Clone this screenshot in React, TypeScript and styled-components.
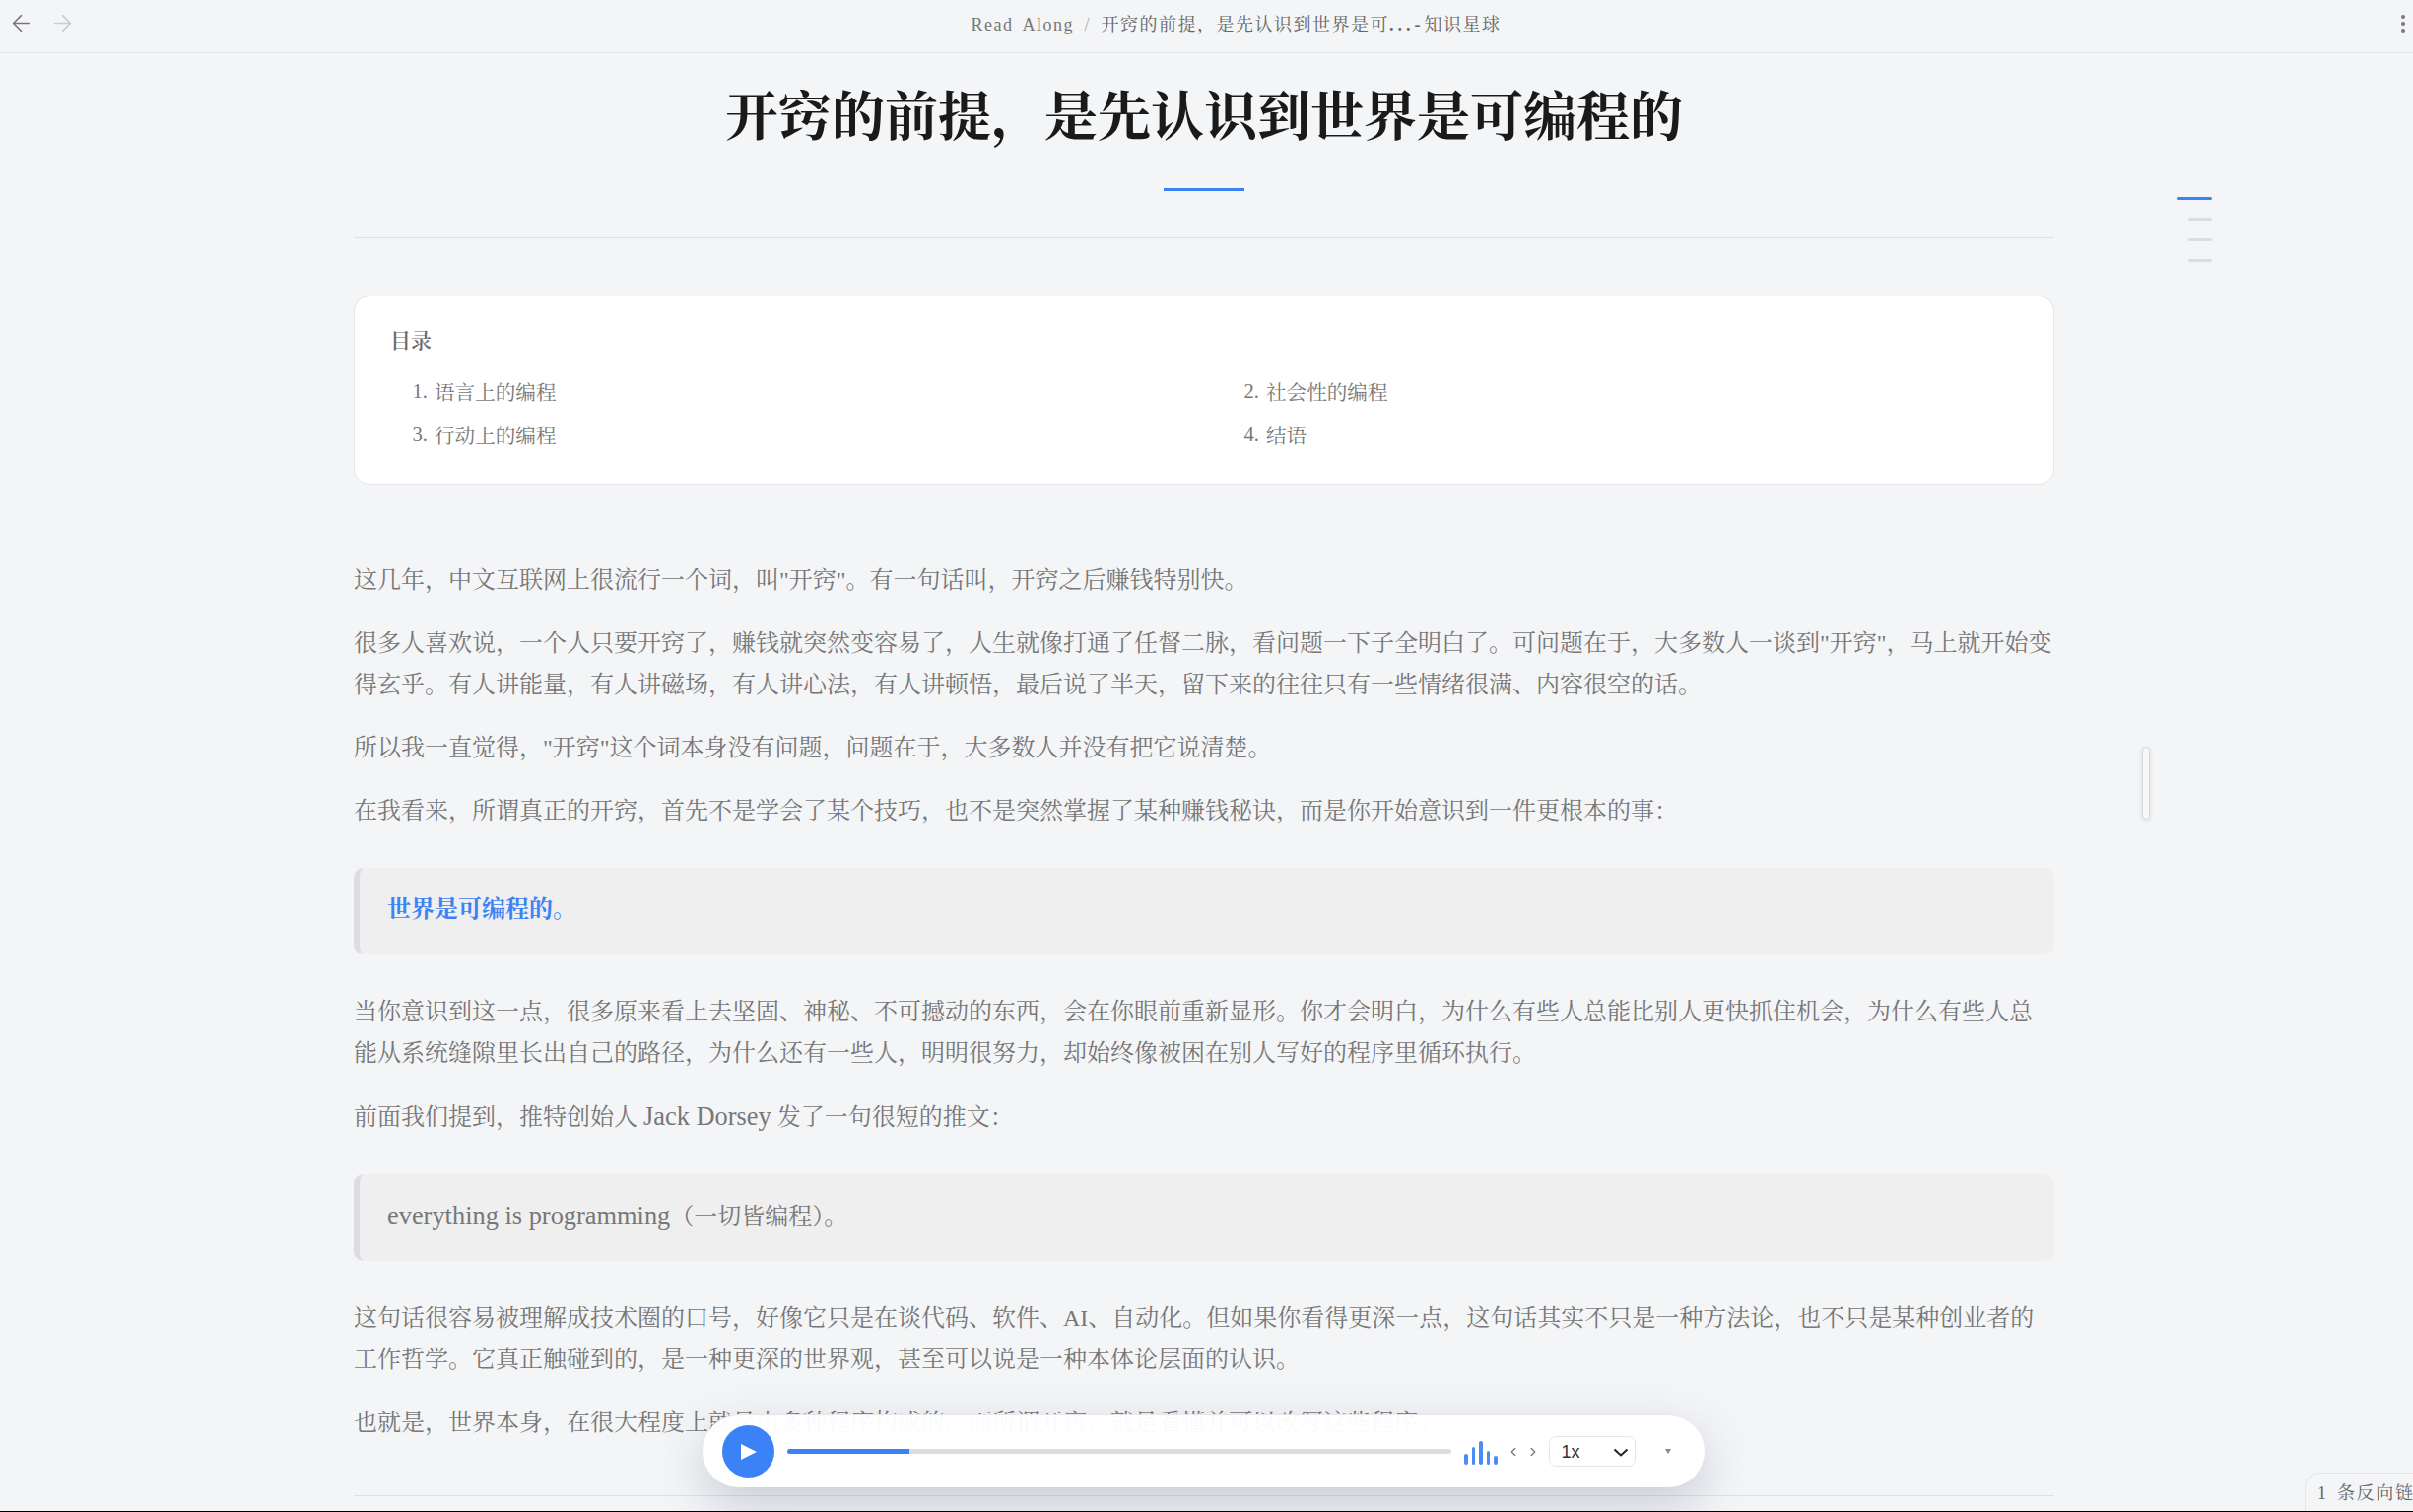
import React from "react";
import styled, { createGlobalStyle } from "styled-components";
import { ArrowLeft, ArrowRight, ChevronLeft, ChevronRight } from "lucide-react";

const serif = `"Liberation Serif", "Noto Serif CJK SC", "Noto Sans CJK SC", serif`;

const GlobalStyle = createGlobalStyle`
  html, body {
    margin: 0;
    background: #000;
  }
  * {
    box-sizing: border-box;
  }
`;

const Page = styled.div`
  position: relative;
  height: calc(100vh - 1px);
  overflow: hidden;
  background: #f4f5f7;
  font-family: ${serif};
  color: #777;
`;

const Header = styled.header`
  display: grid;
  grid-template-columns: 100px 1fr 100px;
  align-items: center;
  height: 54px;
  padding: 0 4px 6px 8px;
  border-bottom: 1.5px solid #e5e7eb;
`;

const NavButtons = styled.div`
  display: flex;
  gap: 15px;
`;

const NavIcon = styled.span<{ $dim?: boolean }>`
  display: flex;
  color: ${(p) => (p.$dim ? "#c8cacd" : "#777")};
`;

const Crumbs = styled.div`
  margin-bottom: 2px;
  padding-left: 56px;
  text-align: center;
  font-size: 18px;
  letter-spacing: 1.5px;
  color: #666;
`;

const CrumbRoot = styled.span`
  color: #777;
  word-spacing: 4px;
`;

const Slash = styled.span`
  margin: 0 10.5px;
  color: #aaa;
`;

const Ellipsis = styled.span`
  letter-spacing: 4px;
  font-weight: 700;
`;

const Kebab = styled.div`
  justify-self: end;
  display: flex;
  flex-direction: column;
  gap: 3px;
  margin-right: 4px;
`;

const Dot = styled.i`
  width: 4px;
  height: 4px;
  border-radius: 50%;
  background: #777;
`;

const Article = styled.main`
  width: 1726px;
  margin-left: 359px;
`;

const TitleBlock = styled.div`
  padding-top: 28px;
  padding-bottom: 47px;
  border-bottom: 1.5px solid #e0e1e4;
  display: flex;
  flex-direction: column;
  align-items: center;
`;

const Title = styled.h1`
  margin: 0;
  font-size: 54px;
  line-height: 76px;
  font-weight: 700;
  color: #1a1a1a;
`;

const TitleRule = styled.div`
  width: 82px;
  height: 3px;
  margin-top: 33px;
  background: #3b82f6;
`;

const TocCard = styled.nav`
  margin-top: 58px;
  height: 192px;
  padding: 30px 36px;
  background: #fff;
  border: 1.5px solid #e4e5e8;
  border-radius: 16px;
`;

const TocHeading = styled.div`
  font-size: 21px;
  line-height: 30px;
  font-weight: 600;
  color: #6a6a6a;
`;

const TocGrid = styled.ol`
  display: grid;
  grid-template-columns: 844px 1fr;
  grid-auto-rows: 44px;
  margin: 14px 0 0;
  padding: 0;
  list-style: none;
`;

const TocItem = styled.li`
  display: flex;
  align-items: center;
  font-size: 20.6px;
  color: #777;
`;

const TocNumber = styled.span`
  width: 45px;
  padding-right: 7px;
  text-align: right;
`;

const Body = styled.div`
  margin-top: 76px;
`;

const Para = styled.p`
  margin: 0 0 22px;
  font-size: 24px;
  line-height: 42px;
  color: #777;
`;

const Latin = styled.span`
  font-size: 26.4px;
`;

const Quote = styled.blockquote`
  display: flex;
  align-items: center;
  height: 88px;
  margin: 37px 0 37px;
  padding: 0 0 4px 28px;
  font-size: 24px;
  line-height: 42px;
  color: #777;
  background: #efefef;
  border-left: 6px solid #dcdde0;
  border-radius: 10px;
`;

const Highlight = styled.span`
  color: #3b82f6;
`;

const Strong = styled.strong`
  font-weight: 700;
`;

const BottomRule = styled.hr`
  width: 1726px;
  margin: 53px 0 0 359px;
  border: 0;
  border-top: 1.5px solid #e0e1e4;
`;

const Rail = styled.div`
  position: absolute;
  top: 200px;
  left: 2209px;
  width: 36px;
  display: flex;
  flex-direction: column;
  align-items: flex-end;
  gap: 18px;
`;

const RailMark = styled.i<{ $active?: boolean }>`
  height: 3px;
  border-radius: 2px;
  width: ${(p) => (p.$active ? "36px" : "24px")};
  background: ${(p) => (p.$active ? "#3b82f6" : "#dcdde0")};
`;

const ScrollThumb = styled.div`
  position: absolute;
  top: 758px;
  left: 2174px;
  width: 8px;
  height: 74px;
  background: #f8f8f9;
  border: 1.5px solid #d6d7da;
  border-radius: 5px;
  box-shadow: 0 1px 5px rgba(0, 0, 0, 0.1);
`;

const Player = styled.div`
  position: absolute;
  left: 713px;
  top: 1436px;
  width: 1017px;
  height: 74px;
  display: flex;
  align-items: center;
  padding: 0 20px;
  background: rgba(255, 255, 255, 0.96);
  border-top: 1.5px solid #e5e7eb;
  border-radius: 37px;
  box-shadow: 0 18px 50px rgba(60, 75, 110, 0.24);
`;

const PlayButton = styled.button`
  flex: none;
  display: flex;
  align-items: center;
  justify-content: center;
  width: 53px;
  height: 53px;
  padding: 0 0 0 1px;
  border: 0;
  border-radius: 50%;
  background: #3b82f6;
`;

const Track = styled.div`
  flex: none;
  width: 674px;
  height: 5px;
  margin-left: 13px;
  border-radius: 3px;
  background: #dcdde0;
  overflow: hidden;
`;

const TrackFill = styled.div`
  height: 100%;
  background: #3b82f6;
`;

const Bars = styled.div`
  display: flex;
  align-items: flex-end;
  gap: 4px;
  height: 24px;
  margin-left: 13px;
  margin-top: 2px;
`;

const Bar = styled.i<{ $h: number }>`
  width: 3.5px;
  height: ${(p) => p.$h}px;
  border-radius: 2px;
  background: #4a8cf5;
`;

const Skip = styled.span`
  display: flex;
  gap: 6px;
  margin-left: 9px;
  color: #777;
`;

const SpeedWrap = styled.div`
  position: relative;
  margin-left: 9px;
  display: flex;
`;

const SpeedSelect = styled.select`
  appearance: none;
  width: 88px;
  height: 31px;
  padding-left: 12px;
  font-family: "Liberation Sans", sans-serif;
  font-size: 18px;
  color: #333;
  background: #fff;
  border: 1.5px solid #e5e7eb;
  border-radius: 7px;
`;

const SpeedChevron = styled.svg`
  position: absolute;
  top: 12px;
  right: 7px;
  pointer-events: none;
`;

const Caret = styled.span`
  width: 0;
  height: 0;
  margin-left: 30px;
  border-left: 3px solid transparent;
  border-right: 3px solid transparent;
  border-top: 5px solid #888;
`;

const Backlinks = styled.div`
  position: absolute;
  left: 2339px;
  top: 1495px;
  width: 180px;
  height: 60px;
  padding: 5px 0 0 12px;
  font-size: 18px;
  letter-spacing: 1.7px;
  word-spacing: 3px;
  white-space: nowrap;
  color: #666;
  background: #f4f5f7;
  border: 1.5px solid #e4e5e8;
  border-radius: 15px 0 0 0;
`;

const tocItems = [
  { n: "1.", t: "语言上的编程" },
  { n: "2.", t: "社会性的编程" },
  { n: "3.", t: "行动上的编程" },
  { n: "4.", t: "结语" },
];

const barHeights = [11, 18, 24, 14, 9];

export default function App() {
  return (
    <Page>
      <GlobalStyle />
      <Header>
        <NavButtons>
          <NavIcon><ArrowLeft size={27} strokeWidth={1.3} /></NavIcon>
          <NavIcon $dim><ArrowRight size={27} strokeWidth={1.3} /></NavIcon>
        </NavButtons>
        <Crumbs>
          <CrumbRoot>Read Along</CrumbRoot>
          <Slash>/</Slash>
          开窍的前提，是先认识到世界是可<Ellipsis>...-</Ellipsis>知识星球
        </Crumbs>
        <Kebab>
          <Dot />
          <Dot />
          <Dot />
        </Kebab>
      </Header>

      <Article>
        <TitleBlock>
          <Title>开窍的前提，是先认识到世界是可编程的</Title>
          <TitleRule />
        </TitleBlock>

        <TocCard>
          <TocHeading>目录</TocHeading>
          <TocGrid>
            {tocItems.map((item) => (
              <TocItem key={item.n}>
                <TocNumber>{item.n}</TocNumber>
                {item.t}
              </TocItem>
            ))}
          </TocGrid>
        </TocCard>

        <Body>
          <Para>这几年，中文互联网上很流行一个词，叫"开窍"。有一句话叫，开窍之后赚钱特别快。</Para>
          <Para>很多人喜欢说，一个人只要开窍了，赚钱就突然变容易了，人生就像打通了任督二脉，看问题一下子全明白了。可问题在于，大多数人一谈到"开窍"，马上就开始变得玄乎。有人讲能量，有人讲磁场，有人讲心法，有人讲顿悟，最后说了半天，留下来的往往只有一些情绪很满、内容很空的话。</Para>
          <Para>所以我一直觉得，"开窍"这个词本身没有问题，问题在于，大多数人并没有把它说清楚。</Para>
          <Para>在我看来，所谓真正的开窍，首先不是学会了某个技巧，也不是突然掌握了某种赚钱秘诀，而是你开始意识到一件更根本的事：</Para>
          <Quote>
            <Highlight><Strong>世界是可编程的</Strong>。</Highlight>
          </Quote>
          <Para>当你意识到这一点，很多原来看上去坚固、神秘、不可撼动的东西，会在你眼前重新显形。你才会明白，为什么有些人总能比别人更快抓住机会，为什么有些人总能从系统缝隙里长出自己的路径，为什么还有一些人，明明很努力，却始终像被困在别人写好的程序里循环执行。</Para>
          <Para>前面我们提到，推特创始人 <Latin>Jack Dorsey</Latin> 发了一句很短的推文：</Para>
          <Quote>
            <span><Latin>everything is programming</Latin>（一切皆编程）。</span>
          </Quote>
          <Para>这句话很容易被理解成技术圈的口号，好像它只是在谈代码、软件、AI、自动化。但如果你看得更深一点，这句话其实不只是一种方法论，也不只是某种创业者的工作哲学。它真正触碰到的，是一种更深的世界观，甚至可以说是一种本体论层面的认识。</Para>
          <Para>也就是，世界本身，在很大程度上就是由多种程序构成的，而所谓开窍，就是看懂并可以改写这些程序。</Para>
        </Body>
      </Article>
      <BottomRule />

      <Rail>
        <RailMark $active />
        <RailMark />
        <RailMark />
        <RailMark />
      </Rail>
      <ScrollThumb />

      <Player>
        <PlayButton aria-label="play">
          <svg width="16" height="16" viewBox="0 0 16 16"><path d="M0 0 L16 8 L0 16 Z" fill="#fff" /></svg>
        </PlayButton>
        <Track><TrackFill style={{ width: "18.4%" }} /></Track>
        <Bars>
          {barHeights.map((h, i) => <Bar key={i} $h={h} />)}
        </Bars>
        <Skip>
          <ChevronLeft size={14} strokeWidth={2.2} />
          <ChevronRight size={14} strokeWidth={2.2} />
        </Skip>
        <SpeedWrap>
          <SpeedSelect defaultValue="1x">
            <option>1x</option>
            <option>1.5x</option>
            <option>2x</option>
          </SpeedSelect>
          <SpeedChevron width="16" height="9" viewBox="0 0 16 9">
            <path d="M1.5 1.5 L8 7.5 L14.5 1.5" fill="none" stroke="#222" strokeWidth="2" />
          </SpeedChevron>
        </SpeedWrap>
        <Caret />
      </Player>

      <Backlinks>1 条反向链接</Backlinks>
    </Page>
  );
}
